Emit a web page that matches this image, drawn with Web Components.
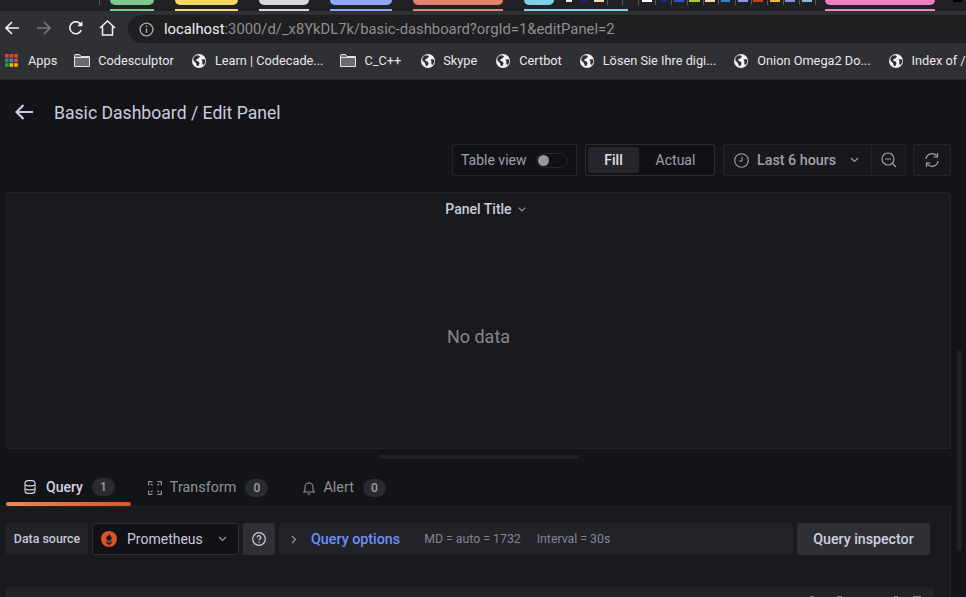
<!DOCTYPE html>
<html lang="en"><head><meta charset="utf-8"><title>Edit Panel</title>
<style>
html,body{margin:0;padding:0;height:597px;overflow:hidden;background:#131417;font-family:Roboto,"Liberation Sans",sans-serif}
</style></head><body>
<browser-tabs></browser-tabs>
<browser-toolbar></browser-toolbar>
<browser-bookmarks></browser-bookmarks>
<gf-editor>
  <gf-header title="Basic Dashboard / Edit Panel"></gf-header>
  <gf-controls></gf-controls>
  <gf-panel></gf-panel>
  <gf-tabs></gf-tabs>
  <gf-query></gf-query>
</gf-editor>
<script>
const def=(name,css,html)=>customElements.define(name,class extends HTMLElement{
  connectedCallback(){ if(this.shadowRoot) return; const r=this.attachShadow({mode:'open'});
    r.innerHTML='<style>'+css+'</style>'+(typeof html==='function'?html(this):html); }
});

/* ---------- browser chrome ---------- */
const tabItems=[
 ['s',99],['p',110,154,'#7fc98f','#7fc98f'],['p',175,238,'#f5d860','#f5d860'],['p',259,309,'#d8d8dc','#d8d8dc'],
 ['p',330,392,'#8ea8f5','#8ea8f5'],['p',413,503,'#e88070','#e88070'],['p',524,554,'#7fd0ea','#7fd0ea',628],
 ['f',566,572,'#eeeeee'],['f',582,587,'#20208a'],['f',594,604,'#f3d9a8'],['s',607],['s',622],['s',638],['f',642,652,'#ffffff'],['s',655],
 ['f',661,667,'#1c2c90'],['s',671],['f',674,684,'#3550d0'],['s',687],['f',689,700,'#a8cc30'],['s',703],['f',705,715,'#f5d8a8'],['s',718],
 ['f',721,730,'#2d86c8'],['s',735],['f',738,748,'#8d96e8'],['s',751],['f',753,763,'#c24020'],['s',767],['f',770,780,'#f2b830'],['s',783],
 ['f',785,795,'#8890d8'],['s',799],['f',802,812,'#80bcd8'],['s',815],['p',825,935,'#f57fc0','#f57fc0'],['f',953,962,'#000000']
];
def('browser-tabs',`
 :host{display:block;height:11px;background:#202124;position:relative;overflow:hidden}
 i{position:absolute;display:block}
 .pill{top:0;height:5px;border-radius:0 0 7px 7px}
 .line{top:9px;height:2px}
 .sep{top:0;height:5px;width:1px;background:#55575b}
 .fav{top:0;height:2px}
`,()=>tabItems.map(t=>{
  if(t[0]==='s') return `<i class="sep" style="left:${t[1]}px"></i>`;
  if(t[0]==='f') return `<i class="fav" style="left:${t[1]}px;width:${t[2]-t[1]}px;background:${t[3]}"></i>`;
  return `<i class="pill" style="left:${t[1]}px;width:${t[2]-t[1]}px;background:${t[3]}"></i><i class="line" style="left:${t[1]}px;width:${(t[5]||t[2])-t[1]}px;background:${t[4]}"></i>`;
}).join(''));

def('browser-toolbar',`
 :host{display:flex;align-items:center;height:33px;background:#2f3034;box-sizing:border-box;padding:0 0 0 5px}
 svg{display:block;flex:none}
 .nav{width:14px;height:14px;margin-right:18px}
 .home{width:17px;height:16px;margin-left:-2px;margin-right:12px}
 .pill{flex:1;height:28px;margin-top:4px;margin-bottom:1px;background:#1e1f21;border-radius:14px 0 0 14px;display:flex;align-items:center;padding-left:11px;min-width:0}
 .url{font:14.8px/28px Roboto,"Liberation Sans",sans-serif;color:#8e8f91;margin-left:10px;white-space:nowrap}
 b{font-weight:400;color:#f1f1f2}
`,`
 <svg class="nav" viewBox="0 0 14 14" fill="none" stroke="#f2f2f3" stroke-width="1.6"><path d="M14 7H1M7 1 1 7l6 6"/></svg>
 <svg class="nav" viewBox="0 0 14 14" fill="none" stroke="#77787b" stroke-width="1.6"><path d="M0 7h13M7 1l6 6-6 6"/></svg>
 <svg class="nav" viewBox="0 0 14 14" fill="none" stroke="#f2f2f3" stroke-width="1.6"><path d="M12.3 9.2A6 6 0 1 1 11.2 2.6L13 4.3"/><path d="M13.4 0v5.2H8.2z" fill="#f2f2f3" stroke="none"/></svg>
 <svg class="home" viewBox="0 0 17 16" fill="none" stroke="#f2f2f3" stroke-width="1.5"><path d="M1 8 8.500 1 16 8M3.500 6.500V15h10V6.500"/></svg>
 <div class="pill">
  <svg width="15" height="15" viewBox="0 0 15 15" fill="none" stroke="#a6a7a9" stroke-width="1.4"><circle cx="7.500" cy="7.500" r="6.400"/><path d="M7.500 6.500v4.500"/><path d="M7.500 3.600v1.500"/></svg>
  <span class="url"><b>localhost</b>:3000/d/_x8YkDL7k/basic-dashboard?orgId=1&amp;editPanel=2</span>
 </div>`);

const globe=`<svg class="ic" width="14" height="14" viewBox="0 0 14 14"><circle cx="7" cy="7" r="7" fill="#f2f2f3"/><path d="M3 1.800 6.500 1.200 8 2.500 6.300 4.500 4.300 5.300 4.600 7 6.600 7.400 7.600 9.200 6.300 12 5 12 3.800 8.800 1.500 6.800 1.300 4.500zM9.500 5.500 12.800 5.300 13.400 8 11.600 11 10.300 10 10.400 7.500z" fill="#2f3034"/></svg>`;
const folder=`<svg class="ic" width="16" height="13" viewBox="0 0 16 13"><path d="M.5 2V12.500H15.500V2.500H7L5.500.5H1z" fill="#6a6b6e" stroke="#e4e4e6"/><path d="M1 3.500H15" stroke="#e4e4e6"/></svg>`;
const apps=`<svg class="ic" width="13" height="13" viewBox="0 0 13 13">`+[0,1,2].flatMap(r=>[0,1,2].map(c=>`<rect x="${c*4.6}" y="${r*4.6}" width="3.600" height="3.600" fill="${[['#d9453a','#d9453a','#d9453a'],['#2e9a4a','#3d7fe0','#d9453a'],['#2e9a4a','#f2b400','#f2b400']][r][c]}"/>`)).join('')+`</svg>`;
def('bm-item',`
 :host{display:flex;align-items:center;flex:none}
 span{font:12.75px/16px Roboto,"Liberation Sans",sans-serif;color:#e8e8e9;white-space:nowrap}
`,`<slot name="i"></slot><span style="margin-left:var(--g,9px)"><slot></slot></span>`);
def('browser-bookmarks',`
 :host{display:flex;align-items:center;height:36px;box-sizing:border-box;padding-bottom:2px;background:#2f3034;border-bottom:1px solid #222326;overflow:hidden;padding-left:5px;white-space:nowrap}
 svg{display:block;flex:none}
 .a{margin-left:17px}.b{margin-left:18px}
`,`
 <bm-item style="--g:10px"><span slot="i">${apps}</span>Apps</bm-item>
 <bm-item class="a" style="--g:8px"><span slot="i">${folder}</span>Codesculptor</bm-item>
 <bm-item class="b"><span slot="i">${globe}</span>Learn | Codecade...</bm-item>
 <bm-item class="a" style="--g:8px"><span slot="i">${folder}</span>C_C++</bm-item>
 <bm-item style="margin-left:20px;--g:8px"><span slot="i">${globe}</span>Skype</bm-item>
 <bm-item style="margin-left:19px"><span slot="i">${globe}</span>Certbot</bm-item>
 <bm-item style="margin-left:18px"><span slot="i">${globe}</span>Lösen Sie Ihre digi...</bm-item>
 <bm-item class="b"><span slot="i">${globe}</span>Onion Omega2 Do...</bm-item>
 <bm-item class="b"><span slot="i">${globe}</span>Index of /</bm-item>`);

/* ---------- grafana ---------- */
def('gf-editor',`
 :host{display:block;position:relative;height:517px;background:#131417;overflow:hidden;color:#ccccdc;font-family:Roboto,"Liberation Sans",sans-serif}
 .sb{position:absolute;left:957px;top:270px;width:5px;height:201px;background:#1f2125;border-radius:3px}
`,`<slot></slot><div class="sb"></div>`);

def('gf-header',`
 :host{display:flex;align-items:center;height:64px;padding:2px 0 0 15px;box-sizing:border-box}
 svg{display:block;margin-right:21px;margin-top:-2px}
 h1{margin:0;font:400 17.6px/24px Roboto,"Liberation Sans",sans-serif;color:#ccccdc}
`,h=>`<svg width="18" height="16" viewBox="0 0 18 16" fill="none" stroke="#ccccdc" stroke-width="2.200"><path d="M18 8H2M8.500 1 1.500 8l7 7"/></svg><h1>${h.getAttribute('title')}</h1>`);

def('gf-controls',`
 :host{display:flex;justify-content:flex-end;height:32px;padding-right:15px;gap:8px;font-size:14px;color:#a0a0aa}
 .box{display:flex;align-items:center;border:1px solid #23252a;border-radius:2px;box-sizing:border-box;height:32px}
 .tv{width:125px;padding-left:8px;background:#111217}
 .sw{margin-left:9px;width:32px;height:15px;border:1px solid #26282d;border-radius:8px;box-sizing:border-box;position:relative}
 .sw i{position:absolute;left:1px;top:1px;width:11px;height:11px;border-radius:50%;background:#9797a1}
 .seg{width:130px;padding:2px;background:#111217;border-color:#2a2c31}
 .seg span{height:26px;line-height:26px;text-align:center;display:block}
 .fill{width:51px;background:#25262c;color:#e0e0e8;font-weight:500;border-radius:2px}
 .act{flex:1}
 .time{width:183px;margin-right:-1px;background:#17181c}
 .t1{width:148px;display:flex;align-items:center;height:100%;padding-left:10px;box-sizing:border-box;border-right:1px solid #23252a;font-weight:500;font-size:14.3px}
 .t1 span{margin-left:8px}.t1 svg:last-child{margin-left:14px}
 .t2{flex:1;display:flex;justify-content:center}
 .ref{width:38px;justify-content:center;background:#17181c}
 svg{display:block}
`,`
 <div class="box tv">Table view<div class="sw"><i></i></div></div>
 <div class="box seg"><span class="fill">Fill</span><span class="act">Actual</span></div>
 <div class="box time">
  <div class="t1"><svg width="15" height="15" viewBox="0 0 15 15" fill="none" stroke="#a0a0aa" stroke-width="1.100"><circle cx="7.500" cy="7.500" r="6.800"/><path d="M8 3.700V8H5"/></svg><span>Last 6 hours</span><svg width="9" height="6" viewBox="0 0 9 6" fill="none" stroke="#a0a0aa" stroke-width="1.200"><path d="M1 1l3.500 3.500L8 1"/></svg></div>
  <div class="t2"><svg width="16" height="16" viewBox="0 0 16 16" fill="none" stroke="#a0a0aa" stroke-width="1.200"><circle cx="7" cy="7" r="6"/><path d="M4 7h6M11.500 11.500 15 15"/></svg></div>
 </div>
 <div class="box ref"><svg width="16" height="16" viewBox="0 0 16 16" fill="none" stroke="#a0a0aa" stroke-width="1.200"><path d="M2 7A6 6 0 0 1 13 4.500M14 9A6 6 0 0 1 3 11.500"/><path d="M13.500 1v4h-4M2.500 15v-4h4"/></svg></div>`);

def('gf-panel',`
 :host{display:flex;flex-direction:column;margin:16px 15px 0 6px;height:257px;box-sizing:border-box;background:#181a1e;border:1px solid #212328;border-radius:2px}
 .t{height:32px;display:flex;align-items:center;justify-content:center;padding-left:14px;font:500 14px/16px Roboto,"Liberation Sans",sans-serif;color:#ccccdc}
 .t svg{margin-left:6px;display:block}
 .n{flex:1;display:flex;align-items:center;justify-content:center;font:400 18px/24px Roboto,"Liberation Sans",sans-serif;color:#85858e}
`,`<div class="t">Panel Title<svg width="8" height="5" viewBox="0 0 8 5" fill="none" stroke="#9a9aa4" stroke-width="1.100"><path d="M.7.700 4 4 7.300.700"/></svg></div><div class="n">No data</div>`);

def('gf-tab',`
 :host{display:flex;align-items:center;height:32px;box-sizing:border-box;padding:0 16px 5px 18px;flex:none;position:relative;font:400 14.4px/16px Roboto,"Liberation Sans",sans-serif;color:#8f8f99}
 :host([active]){color:#d5d5e2;font-weight:500;font-size:14px;padding-bottom:6px}
 :host([active])::after{content:"";position:absolute;left:0;right:0;bottom:0;height:4px;border-radius:2px;background:linear-gradient(90deg,#f0894a,#e0512f)}
 .l{margin-left:var(--g,8px);margin-right:9px}
 .b{width:23px;height:18px;line-height:18px;border-radius:9px;background:#2a2b31;color:#9e9ea8;font-size:12px;font-weight:500;text-align:center}
 ::slotted(svg){display:block}
`,h=>`<slot></slot><span class="l">${h.getAttribute('label')}</span><span class="b">${h.getAttribute('n')}</span>`);
def('gf-tabs',`
 :host{display:block;margin-top:6px;height:4px}
 .split{width:200px;height:4px;background:#1f2125;border-radius:2px;margin-left:379px}
 .row{display:flex;margin:15px 0 0 6px;height:32px;align-items:stretch}
`,`<div class="split"></div><div class="row">
 <gf-tab active label="Query" n="1" style="--g:10px"><svg width="12" height="14" viewBox="0 0 12 14" fill="none" stroke="#d5d5e2" stroke-width="1.100"><rect x="1" y=".6" width="10" height="12.800" rx="3"/><path d="M1 5c2 1.200 8 1.200 10 0M1 9c2 1.200 8 1.200 10 0"/></svg></gf-tab>
 <gf-tab label="Transform" n="0" style="padding-left:17px"><svg width="14" height="14" viewBox="0 0 14 14" fill="none" stroke="#8f8f99" stroke-width="1.200"><path d="M.6 4.500V.6h4M9.500.6h3.900v3.900M13.400 9.500v3.900H9.500M4.500 13.400H.6V9.500M3 3l1.500 1.500M11 3 9.500 4.500M3 11l1.500-1.500M11 11 9.500 9.500"/></svg></gf-tab>
 <gf-tab label="Alert" n="0" style="padding-left:19px"><svg width="12" height="14" viewBox="0 0 12 14" fill="none" stroke="#8f8f99" stroke-width="1.100"><path d="M.8 11h10.400L10 9V6A4 4 0 0 0 2 6v3zM4.500 13h3M6 1v1"/></svg></gf-tab>
</div>`);

def('gf-query',`
 :host{display:block;position:absolute;left:0;top:426px;width:951px;height:100px;box-sizing:border-box;background:#181a1e;border-top:1px solid #212328;border-right:1px solid #212328;padding:16px 0 0 6px;font:400 12px/32px Roboto,"Liberation Sans",sans-serif}
 .row{display:flex;gap:4px;height:32px}
 .c{border-radius:2px;box-sizing:border-box}
 .ds{width:82px;background:#212329;color:#c8c8d5;font-weight:500;font-size:12.4px;text-align:center}
 .sel{width:147px;background:#111217;border:1px solid #2b2d33;display:flex;align-items:center;padding-left:8px;font-size:14px;line-height:30px;color:#c8c8d5}
 .sel span{margin-left:10px}.sel svg:last-child{margin-left:15px}
 .help{width:32px;background:#2e3036;display:flex;align-items:center;justify-content:center}
 .opt{width:514px;background:#212329;display:flex;align-items:center;padding-left:12px;color:#85858e;font-size:12.3px}
 .opt a{color:#6e8ff5;font-size:14.3px;font-weight:500;margin-left:14px;margin-right:24px}
 .opt span+span{margin-left:16px}
 .insp{width:133px;background:#2e3036;color:#d0d0de;font-size:14.2px;font-weight:500;text-align:center}
 svg{display:block;flex:none}
 .next{margin-top:32px;width:928px;height:30px;background:#212329;border-radius:2px;display:flex;padding:9px 0 0 804px;box-sizing:border-box}
 .next i{display:block;height:1px;background:#77787e;flex:none}
`,`<div class="row">
 <div class="c ds">Data source</div>
 <div class="c sel"><svg width="16" height="16" viewBox="0 0 16 16"><circle cx="8" cy="8" r="8" fill="#d9562c"/><path d="M8 2.300c.5 1.800 2.600 2.400 2.600 5 0 1-.4 1.800-1 2.300H6.400c-.6-.5-1-1.300-1-2.300C5.400 5.800 6.300 5.500 6.400 4.200 7 4.700 7.200 5.200 7.300 5.700 7.900 4.800 8.200 3.500 8 2.300zM4.700 10.400h6.600v1H4.700zM5.600 12h4.800v.9H5.600zM6.800 13.300h2.400v.9H6.800z" fill="#1b1c20"/></svg><span>Prometheus</span><svg width="9" height="6" viewBox="0 0 9 6" fill="none" stroke="#9a9aa4" stroke-width="1.200"><path d="M1 1l3.500 3.500L8 1"/></svg></div>
 <div class="c help"><svg width="14" height="14" viewBox="0 0 14 14" fill="none" stroke="#ccccdc" stroke-width="1.200"><circle cx="7" cy="7" r="6.300"/><path d="M5.200 5.500a1.800 1.800 0 1 1 2.600 1.600c-.6.300-.8.700-.8 1.200M7 9.700v1"/></svg></div>
 <div class="c opt"><svg width="6" height="9" viewBox="0 0 6 9" fill="none" stroke="#9a9aa4" stroke-width="1.100"><path d="M1 1l3.500 3.500L1 8"/></svg><a>Query options</a><span>MD = auto = 1732</span><span>Interval = 30s</span></div>
 <div class="c insp">Query inspector</div>
</div><div class="next"><i style="width:4px"></i><i style="width:5px;margin-left:23px"></i><i style="width:4px;margin-left:52px"></i><i style="width:8px;margin-left:15px"></i></div>`);
</script></body></html>
